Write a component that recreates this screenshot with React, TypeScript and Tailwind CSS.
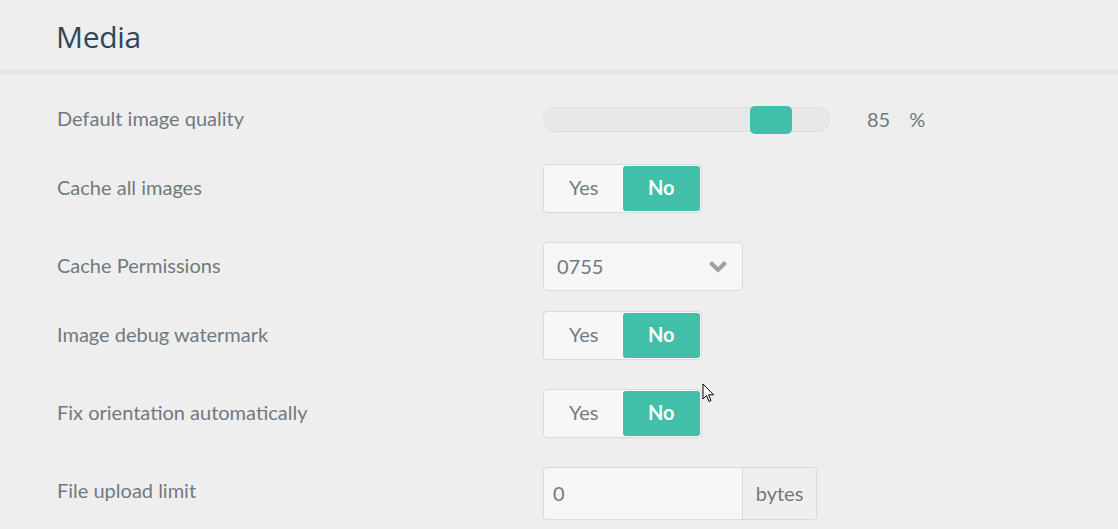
import React from "react";

const label = "w-[543px] shrink-0 pl-[57px] text-[20px] text-[#6f7a80] -mt-[3px]";

function Toggle() {
  return (
    <div className="flex h-[49px] w-[159px] rounded-[4px] border border-[#dadada] bg-[#f7f7f7] p-px">
      <div className="flex w-[78px] items-center justify-center pb-[3px] text-[20px] text-[#737c81]">Yes</div>
      <div className="flex w-[78px] items-center justify-center rounded-[3px] bg-[#41bfa8] pb-[3px] text-[20px] font-bold text-white">No</div>
    </div>
  );
}

export default function App() {
  return (
    <div className="relative h-[529px] w-[1118px] overflow-hidden bg-[#eeeeee] font-['Lato',sans-serif]">
      <div className="h-[74px] border-b-[4px] border-[#e4e4e4] pl-[56px] pt-[17px]">
        <h1 className="font-['Open_Sans',sans-serif] text-[30px] leading-[40px] text-[#2f4858] tracking-[-0.3px]">Media</h1>
      </div>

      <div className="flex flex-col">
        <div className="mt-[31px] flex h-[28px] items-center">
          <div className={label}>Default image quality</div>
          <div className="relative flex h-[25px] w-[287px] items-center rounded-full border border-[#dcdcdc] bg-[#e8e8e8]">
            <div className="absolute left-[206px] top-[-2px] h-[28px] w-[42px] rounded-[5px] bg-[#41bfa8]" />
          </div>
          <div className="ml-[37px] text-[20px] text-[#6f7a80]">85</div>
          <div className="ml-[19px] text-[20px] text-[#6f7a80]">%</div>
        </div>

        <div className="mt-[31px] flex h-[49px] items-center">
          <div className={label}>Cache all images</div>
          <Toggle />
        </div>

        <div className="mt-[29px] flex h-[49px] items-center">
          <div className={label}>Cache Permissions</div>
          <div className="flex h-[49px] w-[200px] items-center justify-between rounded-[4px] border border-[#dadada] bg-[#f6f6f6] pl-[13px] pr-[14px]">
            <span className="-mt-[2px] text-[20px] text-[#6f7a80]">0755</span>
            <svg width="20" height="13" viewBox="0 0 20 13">
              <polyline points="2.5,2.5 10,10 17.5,2.5" fill="none" stroke="#9a9fa2" strokeWidth="4" />
            </svg>
          </div>
        </div>

        <div className="mt-[20px] flex h-[49px] items-center">
          <div className={label}>Image debug watermark</div>
          <Toggle />
        </div>

        <div className="mt-[29px] flex h-[49px] items-center">
          <div className={label}>Fix orientation automatically</div>
          <Toggle />
        </div>

        <div className="mt-[29px] flex h-[53px] items-center">
          <div className="w-[543px] shrink-0 pl-[57px] text-[20px] text-[#6f7a80] -mt-[7px]">File upload limit</div>
          <div className="flex h-[53px] w-[274px] rounded-[4px] border border-[#dadada] bg-[#f6f6f6]">
            <div className="flex w-[198px] items-center pb-[2px] pl-[9px] text-[20px] text-[#6f7a80]">0</div>
            <div className="flex flex-1 items-center justify-center border-l border-[#dadada] bg-[#efefef] pb-[2px] text-[20px] text-[#6f7a80]">bytes</div>
          </div>
        </div>
      </div>

      <svg className="absolute left-[702px] top-[383px]" width="14" height="21" viewBox="0 0 14 21">
        <path d="M1 1 L1 16 L4.5 12.5 L7 18.5 L9 17.6 L6.6 11.8 L11.5 11.8 Z" fill="#fff" stroke="#000" strokeWidth="1" strokeLinejoin="round" />
      </svg>
    </div>
  );
}
